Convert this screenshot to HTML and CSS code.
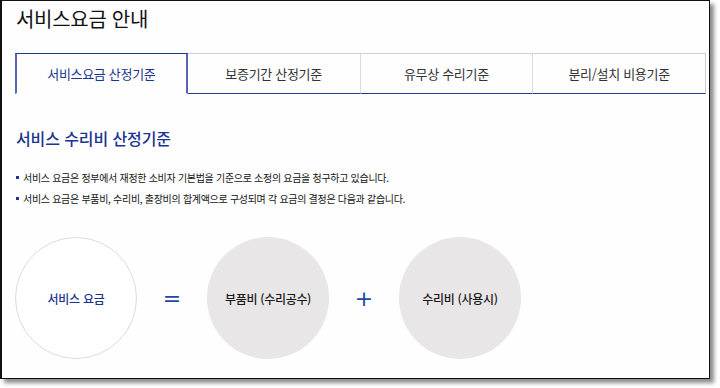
FILE: index.html
```html
<html lang="ko">
<head>
  <meta charset="UTF-8">
  <meta name="viewport" content="width=device-width, initial-scale=1.0">
  <title>서비스요금 안내</title>
  <link rel="stylesheet" href="styles.css">
</head>

<body>
  <div class="frame">
    <!-- Page Title -->
    <h1 class="page-title">서비스요금 안내</h1>

    <!-- Tabs -->
    <ul class="tabs">
      <li class="tab active">서비스요금 산정기준</li>
      <li class="tab">보증기간 산정기준</li>
      <li class="tab">유무상 수리기준</li>
      <li class="tab">분리/설치 비용기준</li>
    </ul>

    <!-- Section -->
    <h2 class="section-title">서비스 수리비 산정기준</h2>
    <ul class="notes">
      <li>서비스 요금은 정부에서 재정한 소비자 기본법을 기준으로 소정의 요금을 청구하고 있습니다.</li>
      <li>서비스 요금은 부품비, 수리비, 출장비의 합계액으로 구성되며 각 요금의 결정은 다음과 같습니다.</li>
    </ul>

    <!-- Formula -->
    <div class="formula">
      <div class="circle outline">서비스 요금</div>
      <span class="op">=</span>
      <div class="circle filled">부품비 (수리공수)</div>
      <span class="op">+</span>
      <div class="circle filled">수리비 (사용시)</div>
    </div>
  </div>
</body>
</html>
```

FILE: styles.css
```css
/* Global Styles */
body {
  margin: 0;
  background-color: #ffffff;
  font-family: "Noto Sans CJK KR", "Noto Sans", sans-serif;
  color: #222;
}

/* Screenshot Frame */
.frame {
  width: 691px;
  height: 377px;
  padding: 0 3px 0 13px;
  background-color: #fefefe;
  border-top: 1px solid #111;
  border-left: 2px solid #111;
  border-right: 1px solid #111;
  border-bottom: 1px solid #111;
  box-shadow: 4px 4px 4px rgba(0, 0, 0, 0.45);
  overflow: hidden;
}

/* Page Title */
.page-title {
  margin: 4px 0 0 1px;
  font-size: 20px;
  line-height: 28px;
  font-weight: normal;
  letter-spacing: -0.3px;
  color: #111;
}

/* Tabs */
.tabs {
  display: flex;
  margin: 20px 0 0;
  padding: 0;
  list-style: none;
}
.tab {
  flex: none;
  width: 25%;
  box-sizing: border-box;
  height: 41px;
  display: flex;
  align-items: center;
  justify-content: center;
  font-size: 13px;
  letter-spacing: -0.3px;
  color: #333;
  border-top: 1px solid #cfcfcf;
  border-right: 1px solid #dcdcdc;
  border-bottom: 1px solid #1b3f93;
}
.tab:last-child {
  border-right-color: #cfcfcf;
}
.tab.active {
  color: #1a3590;
  border-top: 1px solid #1b3a93;
  border-left: 2px solid #5763b3;
  border-right: 2px solid #5763b3;
  border-bottom: 1px solid transparent;
}

/* Section */
.section-title {
  margin: 32px 0 0 1px;
  font-size: 16px;
  line-height: 24px;
  font-weight: 500;
  letter-spacing: -0.1px;
  color: #1a3590;
}
.notes {
  margin: 17px 0 0;
  padding: 0;
  list-style: none;
}
.notes li {
  position: relative;
  padding-left: 8px;
  font-size: 10px;
  line-height: 21px;
  letter-spacing: -0.3px;
  color: #151515;
}
.notes li::before {
  content: "";
  position: absolute;
  left: 1px;
  top: 9px;
  width: 3px;
  height: 3px;
  background-color: #1a3590;
}

/* Formula */
.formula {
  display: flex;
  align-items: center;
  margin-top: 28px;
}
.circle {
  width: 122px;
  height: 122px;
  border-radius: 50%;
  display: flex;
  align-items: center;
  justify-content: center;
  font-size: 12px;
  font-weight: 500;
  letter-spacing: -0.3px;
  box-sizing: border-box;
}
.circle.outline {
  border: 1px solid #dcdcdc;
  color: #1a3590;
  background-color: #ffffff;
}
.circle.filled {
  background-color: #e8e6e6;
  color: #1a1a1a;
}
.op {
  width: 70px;
  text-align: center;
  font-family: "DejaVu Sans", sans-serif;
  font-size: 22px;
  color: #1f47a3;
}
```
